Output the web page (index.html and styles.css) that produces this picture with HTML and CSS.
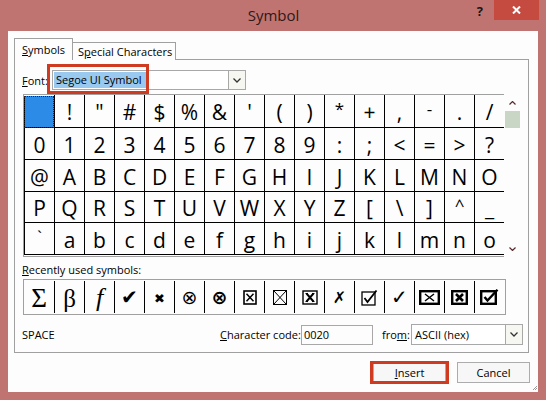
FILE: index.html
```html
<!DOCTYPE html>
<html>
<head>
<meta charset="utf-8">
<link rel="stylesheet" href="styles.css">
</head>
<body>
<div class="window">
  <div class="titlebar">
    <div class="title">Symbol</div>
    <div class="controls">
      <span class="help">?</span>
      <span class="close"><svg width="9" height="8" viewBox="0 0 9 8"><path d="M1 0.5 L8 7.5 M8 0.5 L1 7.5" stroke="#fff" stroke-width="2"/></svg></span>
    </div>
  </div>
  <div class="client">
    <div class="tabs">
      <div class="tab active"><u>S</u>ymbols</div>
      <div class="tab">S<u>p</u>ecial Characters</div>
    </div>
    <div class="panel">
      <div class="font-row">
        <span class="font-label"><u>F</u>ont:</span>
        <div class="combo font-combo">
          <span class="combo-text"><span class="sel">Segoe UI Symbol</span></span>
          <span class="drop"><svg width="8" height="5" viewBox="0 0 8 5"><path d="M0.5 0.5 L4 4 L7.5 0.5" fill="none" stroke="#333" stroke-width="1.3"/></svg></span>
        </div>
        <div class="mark-font"></div>
      </div>
      <div class="grid-row">
        <div class="charmap">
          <span class="cur"></span><span>!</span><span>&quot;</span><span>#</span><span>$</span><span>%</span><span>&amp;</span><span>'</span><span>(</span><span>)</span><span class="small">*</span><span>+</span><span>,</span><span class="small">-</span><span>.</span><span>/</span>
          <span>0</span><span>1</span><span>2</span><span>3</span><span>4</span><span>5</span><span>6</span><span>7</span><span>8</span><span>9</span><span>:</span><span>;</span><span>&lt;</span><span>=</span><span>&gt;</span><span>?</span>
          <span>@</span><span>A</span><span>B</span><span>C</span><span>D</span><span>E</span><span>F</span><span>G</span><span>H</span><span>I</span><span>J</span><span>K</span><span>L</span><span>M</span><span>N</span><span>O</span>
          <span>P</span><span>Q</span><span>R</span><span>S</span><span>T</span><span>U</span><span>V</span><span>W</span><span>X</span><span>Y</span><span>Z</span><span>[</span><span>\</span><span>]</span><span class="small">^</span><span>_</span>
          <span class="small">`</span><span>a</span><span>b</span><span>c</span><span>d</span><span>e</span><span>f</span><span>g</span><span>h</span><span>i</span><span>j</span><span>k</span><span>l</span><span>m</span><span>n</span><span>o</span>
        </div>
        <div class="scrollbar">
          <span class="sb-btn"><svg width="7" height="4" viewBox="0 0 7 4"><path d="M0.5 3.5 L3.5 0.5 L6.5 3.5" fill="none" stroke="#5a2a2a" stroke-width="1.2"/></svg></span>
          <span class="sb-thumb"></span>
          <span class="sb-space"></span>
          <span class="sb-btn"><svg width="7" height="4" viewBox="0 0 7 4"><path d="M0.5 0.5 L3.5 3.5 L6.5 0.5" fill="none" stroke="#5a2a2a" stroke-width="1.2"/></svg></span>
        </div>
      </div>
      <div class="recent-label"><u>R</u>ecently used symbols:</div>
      <div class="recent">
        <span class="serif sigma">&#931;</span>
        <span class="serif beta">&#946;</span>
        <span class="serif fnc"><i>f</i></span>
        <span class="dj check">&#10004;</span>
        <span class="dj heavyx">&#10006;</span>
        <span class="dj otimes">&#8855;</span>
        <span class="dj otimes bold">&#8855;</span>
        <span><svg width="14" height="15" viewBox="0 0 14 15"><rect x="1" y="1" width="12" height="13" fill="none" stroke="#000" stroke-width="1.6"/><path d="M3.5 3.8 L10.5 11.2 M10.5 3.8 L3.5 11.2" stroke="#000" stroke-width="1.5"/></svg></span>
        <span><svg width="14" height="15" viewBox="0 0 14 15"><rect x="0.5" y="0.5" width="13" height="14" fill="none" stroke="#000" stroke-width="1"/><path d="M1 1 L13 14 M13 1 L1 14" stroke="#000" stroke-width="1"/></svg></span>
        <span><svg width="16" height="15" viewBox="0 0 16 15"><rect x="1" y="1" width="14" height="13" fill="none" stroke="#000" stroke-width="1.4"/><path d="M4.5 3.5 L11.5 11.5 M11.5 3.5 L4.5 11.5" stroke="#000" stroke-width="1.9"/><path d="M3.5 3.5 H6 M10 3.5 H12.5 M3.5 11.5 H6 M10 11.5 H12.5" stroke="#000" stroke-width="1"/></svg></span>
        <span class="dj ballotx">&#10007;</span>
        <span><svg width="17" height="17" viewBox="0 0 17 17"><rect x="1" y="3" width="13" height="13" fill="none" stroke="#000" stroke-width="1.3"/><path d="M3.5 9 L6.5 13 L15.5 1.5" fill="none" stroke="#000" stroke-width="1.8"/></svg></span>
        <span class="dj thincheck">&#10003;</span>
        <span><svg width="21" height="15" viewBox="0 0 21 15"><rect x="1.2" y="1.2" width="18.6" height="12.6" fill="none" stroke="#000" stroke-width="2.4"/><path d="M6 4 L15 11 M15 4 L6 11" stroke="#000" stroke-width="1.5"/></svg></span>
        <span><svg width="17" height="15" viewBox="0 0 17 15"><rect x="1.2" y="1.2" width="14.6" height="12.6" fill="none" stroke="#000" stroke-width="2.4"/><path d="M5 4 L12 11 M12 4 L5 11" stroke="#000" stroke-width="2.6"/></svg></span>
        <span><svg width="19" height="16" viewBox="0 0 19 16"><rect x="1.2" y="2.2" width="14.6" height="12.6" fill="none" stroke="#000" stroke-width="2.4"/><path d="M4.5 8 L7.5 11.5 L17.5 0.8" fill="none" stroke="#000" stroke-width="2.4"/></svg></span>
      </div>
      <div class="info-row">
        <span class="space">SPACE</span>
        <span class="cc-label"><u>C</u>haracter code:</span>
        <span class="input">0020</span>
        <span class="from-label">fro<u>m</u>:</span>
        <div class="combo select">
          <span class="combo-text">ASCII (hex)</span>
          <span class="drop"><svg width="8" height="5" viewBox="0 0 8 5"><path d="M0.5 0.5 L4 4 L7.5 0.5" fill="none" stroke="#333" stroke-width="1.3"/></svg></span>
        </div>
      </div>
    </div>
    <div class="buttons">
      <button class="btn insert"><u>I</u>nsert</button>
      <button class="btn">Cancel</button>
    </div>
    <div class="grip"><svg width="6" height="6" viewBox="0 0 6 6"><path d="M5 1 L1 5 M5 3 L3 5" stroke="#9a9a9a" stroke-width="1"/></svg></div>
  </div>
</div>
</body>
</html>
```
FILE: styles.css
```css
* { box-sizing: border-box; }

body {
  margin: 0;
  background: #bf7471;
  font-family: "Open Sans", "Noto Sans", sans-serif;
  font-size: 11px;
  color: #000;
}

u { text-decoration: underline; text-underline-offset: 1px; }

.window {
  width: 546px;
  height: 400px;
  padding: 0 8px 8px;
  display: flex;
  flex-direction: column;
}

.titlebar {
  height: 31px;
  flex: none;
  display: grid;
  grid-template-columns: 1fr auto 1fr;
  margin-right: -1px;
}

.title {
  grid-column: 2;
  font-size: 15px;
  line-height: 20px;
  padding-top: 5px;
  color: #2e1818;
}

.controls {
  grid-column: 3;
  justify-self: end;
  display: flex;
  align-items: flex-start;
}

.help {
  font-weight: bold;
  font-size: 13px;
  line-height: 14px;
  margin-top: 4px;
  margin-right: 11px;
  color: #1c1414;
}

.close {
  width: 45px;
  height: 20px;
  background: #c54b40;
  display: flex;
  align-items: center;
  justify-content: center;
}

.client {
  flex: 1;
  background: #fdfdfd;
  padding: 7px 9px 0 6px;
  display: flex;
  flex-direction: column;
}

.tabs {
  display: flex;
  align-items: flex-end;
  height: 22px;
  margin-bottom: -1px;
  position: relative;
  z-index: 1;
}

.tab {
  height: 18px;
  width: 104px;
  margin-left: -1px;
  border: 1px solid #a0a0a0;
  border-bottom: none;
  padding: 1px 0 0 5px;
  line-height: 16px;
  background: #fdfdfd;
  white-space: nowrap;
}

.tab.active {
  height: 22px;
  width: 59px;
  margin-left: 0;
  padding: 3px 0 0 7px;
  position: relative;
  z-index: 2;
}

.panel {
  height: 294px;
  border: 1px solid #a0a0a0;
  padding: 10px 0 0 7px;
  display: flex;
  flex-direction: column;
}

.font-row {
  display: flex;
  align-items: center;
  height: 20px;
  position: relative;
}

.font-label { width: 30px; }

.combo {
  display: flex;
  height: 20px;
  border: 1px solid #a8a8a8;
  background: #fff;
}

.font-combo { width: 194px; }

.combo-text {
  flex: 1;
  display: flex;
  align-items: center;
  padding-left: 1px;
  white-space: nowrap;
}

.sel {
  background: #99c9ef;
  height: 16px;
  line-height: 16px;
  padding-left: 2px;
  width: 93px;
}

.drop {
  width: 17px;
  border-left: 1px solid #a8a8a8;
  display: flex;
  align-items: center;
  justify-content: center;
  background: #f7f7f2;
}

.mark-font {
  position: absolute;
  left: 25px;
  top: -6px;
  width: 102px;
  height: 30px;
  border: 3px solid #cf3b20;
}

.grid-row {
  display: flex;
  margin-top: 4px;
  margin-left: 1px;
}

.charmap {
  display: grid;
  grid-template-columns: repeat(16, 30px);
  grid-template-rows: 33px 32px 32px 31px 32px;
  border-top: 1px solid #a0a0a0;
  border-left: 1px solid #a0a0a0;
  border-bottom: 1px solid #a0a0a0;
  padding-bottom: 1px;
  font-family: "Open Sans", "DejaVu Sans", sans-serif;
  font-size: 21px;
}

.charmap span {
  border-left: 1px solid #000;
  border-bottom: 1px solid #000;
  display: flex;
  align-items: center;
  justify-content: center;
  line-height: 1;
  padding-top: 3px;
}

.charmap span.small { font-size: 17px; padding-bottom: 8px; }

.charmap span.cur {
  background: #2b8be6;
  outline: 1px dotted #3a1a1a;
  outline-offset: -1px;
  margin: 1px 0 0 0;
}

.scrollbar {
  width: 16px;
  display: flex;
  flex-direction: column;
}

.sb-btn {
  height: 17px;
  display: flex;
  align-items: center;
  justify-content: center;
}

.sb-thumb {
  height: 17px;
  width: 15px;
  margin-left: 1px;
  background: #c9d6c6;
}

.sb-space { flex: 1; }

.recent-label {
  margin-top: 5px;
  line-height: 16px;
  height: 17px;
}

.recent {
  margin-left: 1px;
  width: 483px;
  height: 36px;
  display: flex;
  border: 1px solid #a0a0a0;
  padding: 1px 1px 1px 0;
}

.recent span {
  width: 30px;
  height: 32px;
  display: flex;
  align-items: center;
  justify-content: center;
  line-height: 1;
}

.recent span + span { border-left: 1px solid #000; }

.serif { font-family: "Liberation Serif", serif; }
.dj { font-family: "DejaVu Sans", sans-serif; }

.recent .sigma { font-size: 27px; padding-top: 2px; }
.recent .beta { font-size: 25px; padding-top: 3px; }
.recent .fnc { font-size: 26px; padding-top: 1px; }
.recent .check { font-size: 20px; }
.recent .heavyx { font-size: 13px; padding-top: 3px; }
.recent .otimes { font-size: 19px; }
.recent .otimes.bold { font-weight: bold; }
.recent .ballotx { font-size: 16px; padding-top: 2px; }
.recent .thincheck { font-size: 20px; }

.info-row {
  margin-top: 9px;
  height: 21px;
  display: flex;
  align-items: center;
  white-space: nowrap;
}

.space { width: 198px; }
.cc-label { width: 81px; }

.input {
  width: 72px;
  height: 20px;
  border: 1px solid #a8a8a8;
  padding-left: 2px;
  line-height: 18px;
}

.from-label { width: 38px; padding-left: 9px; }

.select { width: 112px; height: 21px; }
.select .combo-text { padding-left: 3px; }

.buttons {
  display: flex;
  justify-content: flex-end;
  gap: 11px;
  margin-top: 9px;
  margin-right: -1px;
}

.btn {
  width: 73px;
  height: 21px;
  border: 1px solid #acacac;
  background: #f7f7f7;
  font: inherit;
  color: #000;
  padding: 0;
}

.insert { position: relative; }

.insert::after {
  content: "";
  position: absolute;
  left: -4px;
  right: -4px;
  top: -2px;
  bottom: -2px;
  border: 3px solid #cf3b20;
}

.grip {
  margin-top: auto;
  margin-bottom: 1px;
  margin-right: -9px;
  align-self: flex-end;
  width: 6px;
  height: 6px;
  display: flex;
}
```
